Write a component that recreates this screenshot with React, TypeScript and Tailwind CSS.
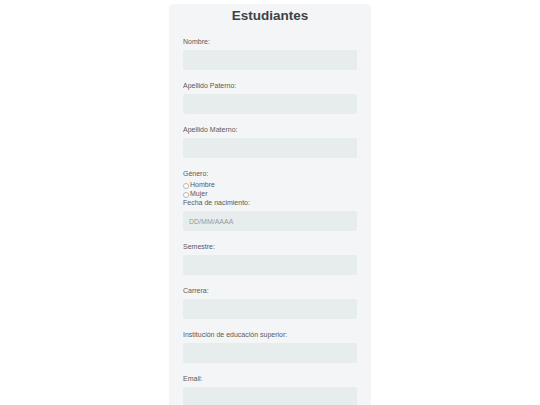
import React from "react";

const fields = [
  { id: "nombre", label: "Nombre:" },
  { id: "paterno", label: "Apellido Paterno:" },
  { id: "materno", label: "Apellido Materno:" },
];

const fieldsAfter = [
  { id: "semestre", label: "Semestre:" },
  { id: "carrera", label: "Carrera:" },
  { id: "institucion", label: "Institución de educación superior:" },
  { id: "email", label: "Email:" },
];

function Field({ id, label, placeholder }: { id: string; label: string; placeholder?: string }) {
  return (
    <div className="mb-[12px]">
      <label htmlFor={id} className="block text-[7px] leading-[8px] text-[#5a5a5a] mb-[4px]">
        {label}
      </label>
      <input
        id={id}
        type="text"
        placeholder={placeholder}
        className="block w-full h-[20px] bg-[#e7eded] rounded-[2px] px-[6px] text-[7px] text-[#555] placeholder:text-[#9a9a9a] outline-none"
      />
    </div>
  );
}

export default function App() {
  return (
    <div
      className="min-h-[405px] bg-white flex justify-center pt-[4px]"
      style={{ fontFamily: '"Liberation Sans", Arial, sans-serif' }}
    >
      <form className="w-[202px] bg-[#f4f5f7] rounded-[4px] px-[14px] pt-[4px] pb-[20px]">
        <h1 className="text-center text-[13.5px] leading-[16px] font-bold text-[#3d4246] mb-[14px]">
          Estudiantes
        </h1>
        {fields.map((f) => (
          <Field key={f.id} id={f.id} label={f.label} />
        ))}
        <div className="mb-[12px]">
          <span className="block text-[7px] leading-[8px] text-[#5a5a5a] mb-[3px]">Género:</span>
          {["Hombre", "Mujer"].map((g) => (
            <label key={g} className="flex items-center h-[9px] text-[7px] text-[#5a5a5a]">
              <span className="inline-block w-[6px] h-[6px] rounded-full border-[0.5px] border-[#b8b8b8] bg-white mr-[1px]" />
              {g}
            </label>
          ))}
          <label htmlFor="fecha" className="block text-[7px] leading-[8px] text-[#5a5a5a] mb-[4px]">
            Fecha de nacimiento:
          </label>
          <input
            id="fecha"
            type="text"
            placeholder="DD/MM/AAAA"
            className="block w-full h-[20px] bg-[#e7eded] rounded-[2px] px-[6px] text-[7px] text-[#555] placeholder:text-[#9a9a9a] outline-none"
          />
        </div>
        {fieldsAfter.map((f) => (
          <Field key={f.id} id={f.id} label={f.label} />
        ))}
      </form>
    </div>
  );
}
